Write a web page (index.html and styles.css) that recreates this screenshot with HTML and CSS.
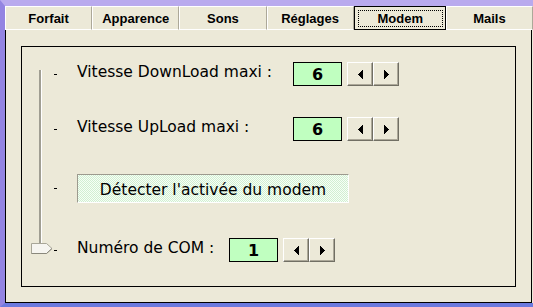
FILE: index.html
```html
<!DOCTYPE html>
<html>
<head>
	<title>Options - Modem</title>
	<link rel="stylesheet" href="styles.css">
</head>
<body>
	<div class="window">
		<div class="tabs">
			<div class="tab">Forfait</div>
			<div class="tab">Apparence</div>
			<div class="tab">Sons</div>
			<div class="tab">Réglages</div>
			<div class="tab active"><span class="focus">Modem</span></div>
			<div class="tab">Mails</div>
		</div>
		<div class="panel">
			<div class="group">
				<div class="slider">
					<div class="track"></div>
					<svg class="thumb" width="22" height="11" viewBox="0 0 22 11">
						<polygon points="0.5,0.5 15.5,0.5 21,5.5 15.5,10.5 0.5,10.5" fill="#f6f5f0" stroke="#a8a698"/>
						<polyline points="0.5,10.5 15.5,10.5 21,5.5" fill="none" stroke="#8a887c"/>
					</svg>
				</div>
				<div class="rows">
					<div class="row row-down">
						<span class="tick"></span>
						<span class="label">Vitesse DownLoad maxi :</span>
						<span class="value">6</span>
						<div class="spin">
							<button class="spin-btn"><svg width="5" height="9" viewBox="0 0 5 9"><polygon points="5,0 5,9 0,4.5" fill="#000"/></svg></button>
							<button class="spin-btn"><svg width="5" height="9" viewBox="0 0 5 9"><polygon points="0,0 0,9 5,4.5" fill="#000"/></svg></button>
						</div>
					</div>
					<div class="row row-up">
						<span class="tick"></span>
						<span class="label">Vitesse UpLoad maxi :</span>
						<span class="value">6</span>
						<div class="spin">
							<button class="spin-btn"><svg width="5" height="9" viewBox="0 0 5 9"><polygon points="5,0 5,9 0,4.5" fill="#000"/></svg></button>
							<button class="spin-btn"><svg width="5" height="9" viewBox="0 0 5 9"><polygon points="0,0 0,9 5,4.5" fill="#000"/></svg></button>
						</div>
					</div>
					<div class="row row-detect">
						<span class="tick"></span>
						<button class="detect">Détecter l'activée du modem</button>
					</div>
					<div class="row row-com">
						<span class="tick"></span>
						<span class="label label-short">Numéro de COM :</span>
						<span class="value">1</span>
						<div class="spin">
							<button class="spin-btn"><svg width="5" height="9" viewBox="0 0 5 9"><polygon points="5,0 5,9 0,4.5" fill="#000"/></svg></button>
							<button class="spin-btn"><svg width="5" height="9" viewBox="0 0 5 9"><polygon points="0,0 0,9 5,4.5" fill="#000"/></svg></button>
						</div>
					</div>
				</div>
			</div>
		</div>
	</div>
</body>
</html>
```

FILE: styles.css
```css
body {
	margin: 0;
	padding: 0;
	background-color: #ece9d8;
	font-family: "DejaVu Sans", Verdana, sans-serif;
}

.window {
	width: 533px;
	height: 307px;
	box-sizing: border-box;
	display: flex;
	flex-direction: column;
	background-color: #ece9d8;
	border-top: 6px solid #b9aaee;
	border-left: 5px solid #9384e2;
	border-bottom: 4px solid #6c7ade;
}

.tabs {
	display: flex;
	height: 24px;
}

.tab {
	flex: 1;
	box-sizing: border-box;
	display: flex;
	align-items: center;
	justify-content: center;
	font-family: "Liberation Sans", Arial, sans-serif;
	font-weight: bold;
	font-size: 13px;
	color: #000;
	border-top: 1px solid #fff;
	border-left: 1px solid #fff;
	border-right: 1px solid #aca899;
	border-bottom: 1px solid #fff;
}

.tab.active {
	border: 1px solid #000;
	padding: 3px 2px 2px 3px;
}

.focus {
	flex: 1;
	align-self: stretch;
	display: flex;
	align-items: center;
	justify-content: center;
	border: 1px dotted #000;
}

.panel {
	flex: 1;
	display: flex;
	margin-right: 1px;
	padding: 16px 15px 15px 15px;
	border-left: 1px solid #000;
	border-right: 1px solid #000;
	border-bottom: 1px solid #000;
}

.group {
	flex: 1;
	display: flex;
	border: 1px solid #000;
}

.slider {
	position: relative;
	width: 31px;
}

.track {
	position: absolute;
	left: 17px;
	top: 23px;
	bottom: 38px;
	width: 0;
	border-left: 2px solid #a09e92;
	border-right: 1px solid #fff;
}

.thumb {
	position: absolute;
	left: 9px;
	bottom: 32px;
	display: block;
}

.rows {
	display: flex;
	flex-direction: column;
	padding-top: 15px;
}

.row {
	display: flex;
	align-items: center;
	height: 24px;
}

.row-down {
	margin-bottom: 31px;
}

.row-up {
	margin-bottom: 33px;
}

.row-detect {
	height: 29px;
	margin-bottom: 35px;
}

.tick {
	width: 3px;
	height: 1px;
	margin-left: 1px;
	margin-right: 20px;
	background-color: #000;
}

.label {
	width: 216px;
	padding-bottom: 4px;
	font-size: 15.5px;
	color: #000;
	white-space: nowrap;
}

.label-short {
	width: 152px;
}

.value {
	width: 49px;
	height: 24px;
	box-sizing: border-box;
	display: flex;
	align-items: center;
	justify-content: center;
	background-color: #c0ffc0;
	border: 1px solid #000;
	font-weight: bold;
	font-size: 16px;
	color: #000;
}

.spin {
	display: flex;
	margin-left: 5px;
}

.spin-btn {
	width: 26px;
	height: 24px;
	box-sizing: border-box;
	padding: 0;
	display: flex;
	align-items: center;
	justify-content: center;
	background-color: #ece9d8;
	border-top: 1px solid #fff;
	border-left: 1px solid #fff;
	border-right: 1px solid #716f64;
	border-bottom: 1px solid #716f64;
	box-shadow: inset -1px -1px 0 #aca899;
}

.spin-btn svg {
	display: block;
	shape-rendering: crispEdges;
}

.detect {
	width: 272px;
	height: 29px;
	box-sizing: border-box;
	padding: 2px 0 0 0;
	font-family: "DejaVu Sans", Verdana, sans-serif;
	font-size: 15.5px;
	color: #000;
	background-color: #e4f6e4;
	background-image: repeating-conic-gradient(#d2eed2 0 25%, #f6fff6 0 50%);
	background-size: 2px 2px;
	border-top: 1px solid #9c9a8e;
	border-left: 1px solid #9c9a8e;
	border-right: 1px solid #fff;
	border-bottom: 1px solid #fff;
}
```
